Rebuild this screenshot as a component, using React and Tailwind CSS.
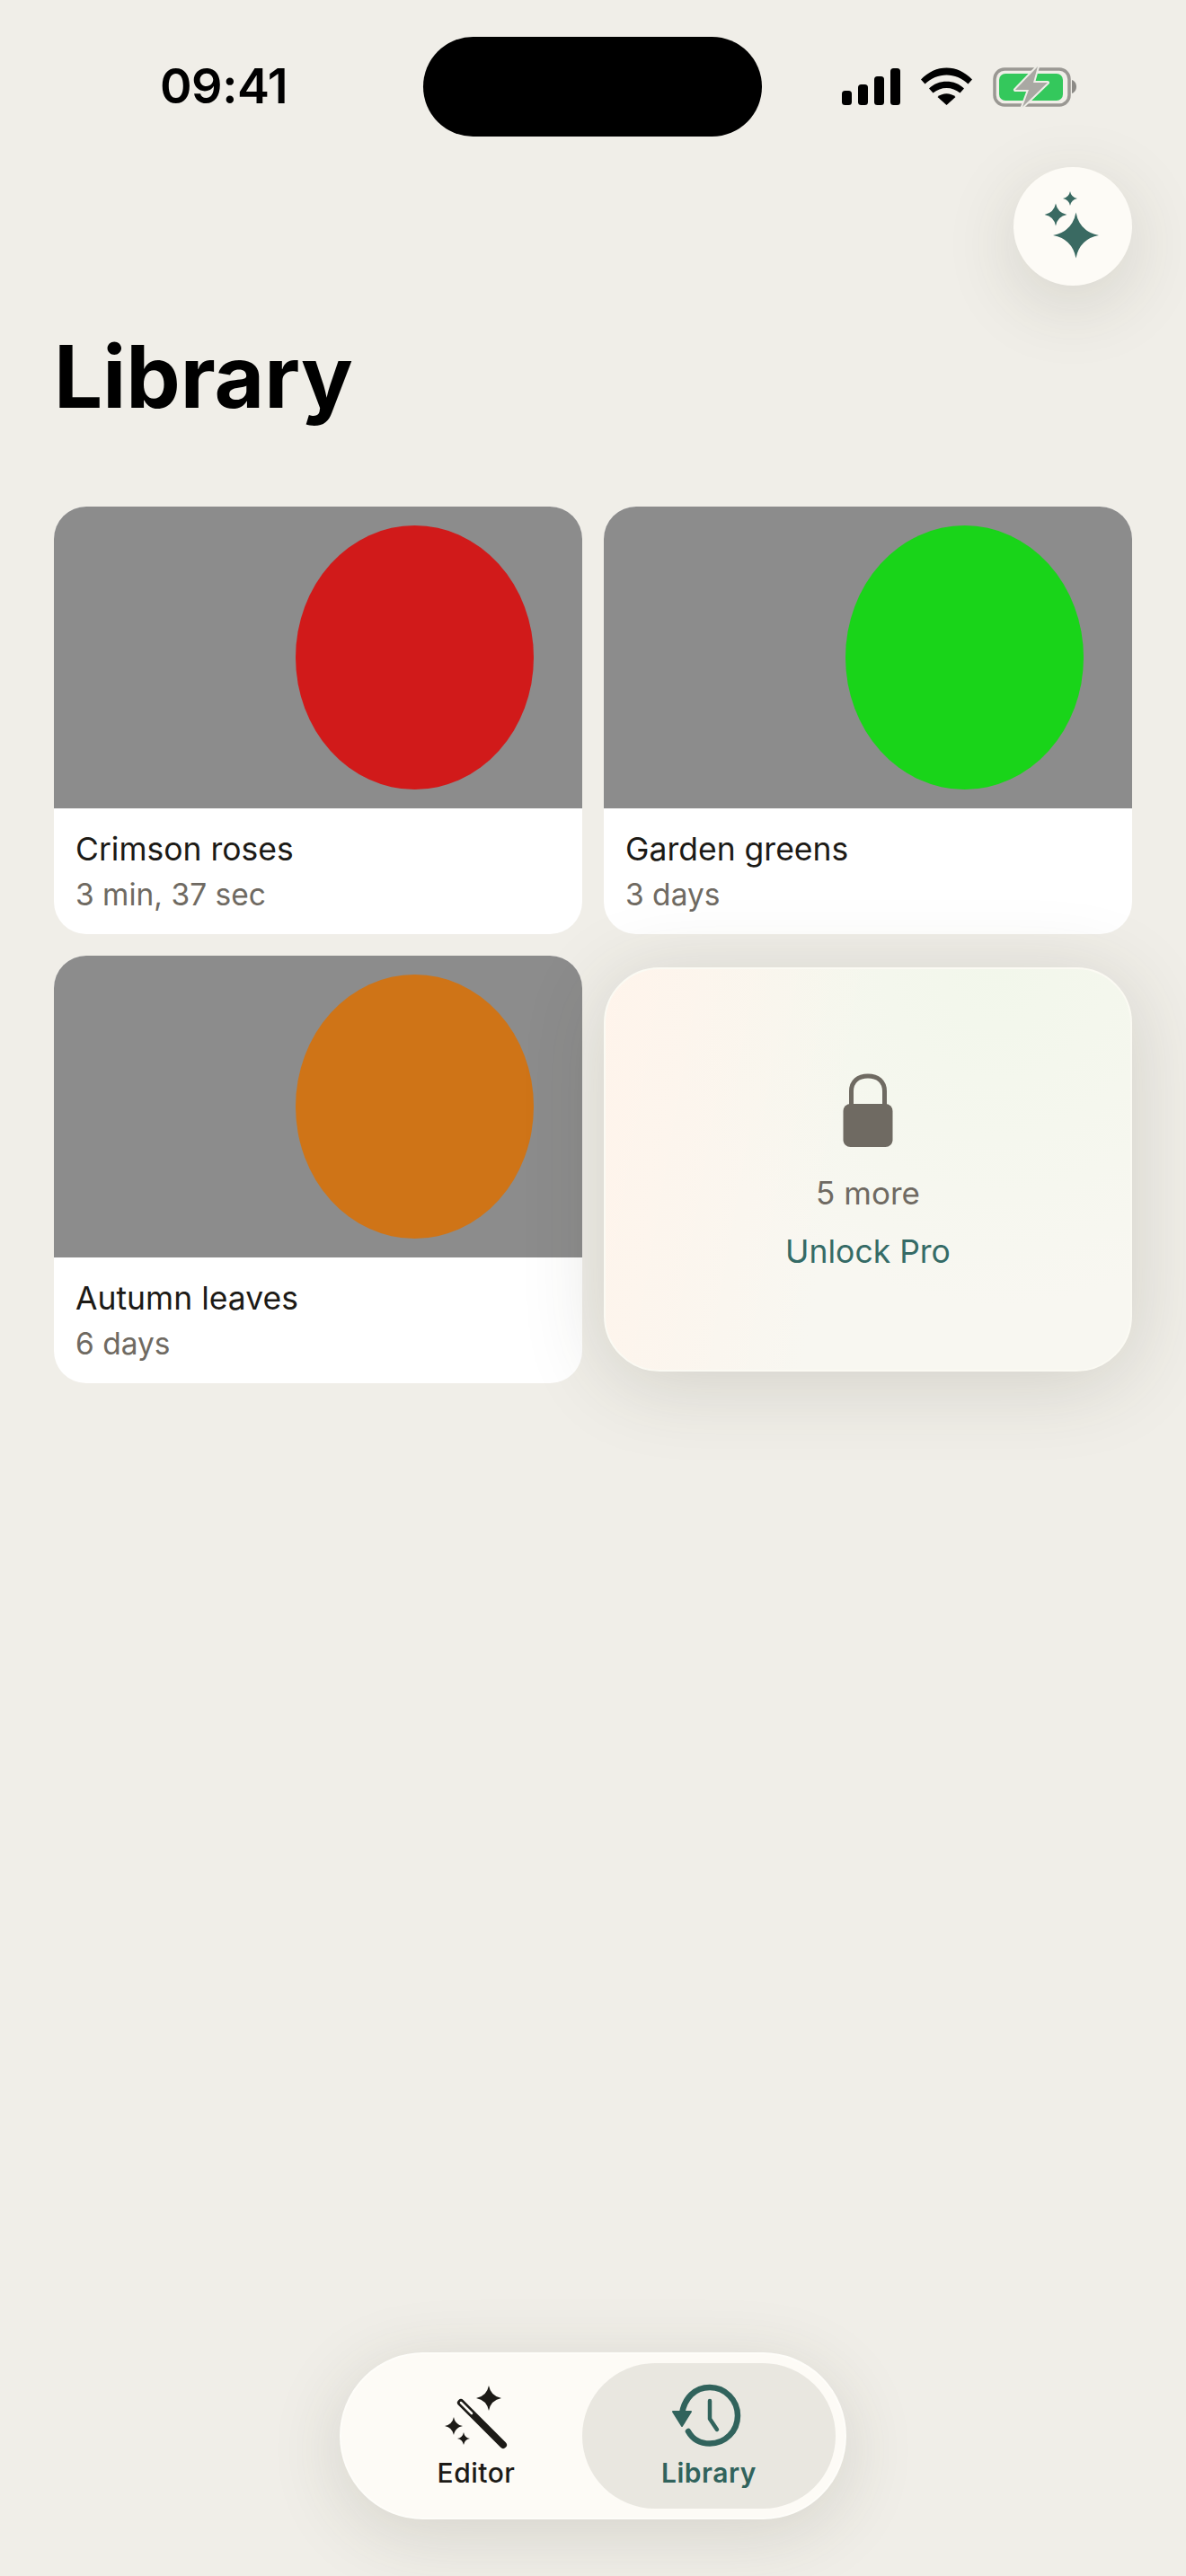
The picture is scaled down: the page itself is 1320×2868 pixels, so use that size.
const cards = [
  { name: "Crimson roses", age: "3 min, 37 sec", blob: "bg-[#d11a1a]" },
  { name: "Garden greens", age: "3 days", blob: "bg-[#19d419]" },
  { name: "Autumn leaves", age: "6 days", blob: "bg-[#cf7417]" },
];

// four point star, the same shape is used on the button and in the wand icon
const star = (cx, cy, r) => {
  const k = r * 0.16;
  return `M${cx} ${cy - r}Q${cx + k} ${cy - k} ${cx + r} ${cy}Q${cx + k} ${cy + k} ${cx} ${cy + r}Q${cx - k} ${cy + k} ${cx - r} ${cy}Q${cx - k} ${cy - k} ${cx} ${cy - r}Z`;
};

function StatusBar() {
  return (
    <div className="flex h-[111px] mt-[41px] items-center">
      <div className="w-[471px] pl-[178px] pb-[1px] text-[54px] leading-none font-semibold text-black tracking-[-0.5px]">09:41</div>
      <div className="w-[377px] h-[111px] rounded-full bg-black" />
      <svg width="261" height="46" viewBox="0 -1 261 46" className="ml-[89px]">
        <rect x="0" y="26" width="11" height="16" rx="3.5" fill="#000" />
        <rect x="18" y="19" width="11" height="23" rx="3.5" fill="#000" />
        <rect x="36" y="10" width="11" height="32" rx="3.5" fill="#000" />
        <rect x="54" y="1" width="11" height="41" rx="3.5" fill="#000" />
        <path d="M88 13.5C104 -4 129 -4 145 13.5L140.5 18.5C127 5 106 5 92.5 18.5Z" fill="#000" />
        <path d="M97 23.5C107 13 126 13 136 23.5L131.5 28.5C123 21 110 21 101.5 28.5Z" fill="#000" />
        <path d="M106.5 33C112 28 121 28 126.5 33L116.5 42Z" fill="#000" />
        <rect x="170" y="2" width="83" height="40" rx="11" fill="none" stroke="#9a9893" strokeWidth="3.5" />
        <rect x="175" y="7" width="71" height="30" rx="7" fill="#34c85c" />
        <path d="M256 14C259 15 261 18 261 21.5C261 25 259 28 256 29Z" fill="#8c8a86" />
        <path d="M218 -1L193 25H208L201 44L229 17H213Z" fill="#a9a8a3" stroke="#eeede7" strokeWidth="4" strokeLinejoin="round" paintOrder="stroke" />
      </svg>
    </div>
  );
}

function SparkleButton() {
  return (
    <div className="flex justify-end mt-[34px] px-[60px]">
      <button className="w-[132px] h-[132px] rounded-full bg-[#fdfbf6] flex items-center justify-center shadow-[0_20px_80px_rgba(60,60,40,0.15)]">
        <svg width="80" height="80" viewBox="0 0 80 80" fill="#3a6a62" className="ml-[2px]">
          <path d={star(42.5, 50, 25.5)} />
          <path d={star(20, 27, 12.4)} />
          <path d={star(36, 9, 8)} />
        </svg>
      </button>
    </div>
  );
}

function ClipCard({ name, age, blob }) {
  return (
    <div className="h-[476px] rounded-[36px] overflow-hidden bg-white">
      <div className="h-[336px] bg-[#8c8c8c] flex items-center justify-end pr-[54px]">
        <div className={`w-[265px] h-[294px] rounded-[50%] ${blob}`} />
      </div>
      <div className="pt-[22px] px-[24px]">
        <div className="text-[35.5px] leading-[48px] text-[#1c1a16]">{name}</div>
        <div className="text-[33.5px] leading-[46px] mt-[3px] text-[#6f6a62]">{age}</div>
      </div>
    </div>
  );
}

function ProCard() {
  return (
    <div className="my-[13px] h-[450px] rounded-[62px] border-2 border-[#fbfaf3] bg-[#f8f7f1] bg-[linear-gradient(100deg,rgba(255,244,235,1)_0%,rgba(255,244,235,0)_45%),radial-gradient(circle_at_75%_0%,rgba(242,247,235,1)_0%,rgba(242,247,235,0)_60%)] shadow-[0_12px_90px_rgba(60,60,40,0.17)] flex flex-col items-center pt-[116px]">
      <svg width="56" height="82" viewBox="0 0 56 82">
        <path d="M9.5 36V20C9.5 9 17 3 28 3S46.5 9 46.5 20V36" fill="none" stroke="#6f6a62" strokeWidth="5" />
        <rect x="0.5" y="34" width="55" height="48" rx="8" fill="#6f6a62" />
      </svg>
      <div className="text-[35px] leading-[46px] mt-[28px] text-[#6f6a62]">5 more</div>
      <div className="text-[35.5px] leading-[46px] mt-[20px] text-[#356b66]">Unlock Pro</div>
    </div>
  );
}

function BottomNav() {
  return (
    <div className="mt-auto mb-[63px] mx-auto w-[564px] h-[186px] rounded-full bg-[#fdfbf6] border-2 border-[#fefdf9] flex justify-end items-center pr-[10px] shadow-[0_16px_80px_rgba(60,60,40,0.15)]">
      <div className="w-[236px] flex flex-col items-center pt-[2px]">
        <svg width="72" height="72" viewBox="0 0 72 72" fill="#1c1a16">
          <path d={star(50, 15, 14)} />
          <path d={star(11, 46, 10)} />
          <path d={star(22, 60, 7)} />
          <path d="M19 20L66 67" stroke="#1c1a16" strokeWidth="8" strokeLinecap="round" fill="none" />
          <path d="M19 20L31 32" stroke="#fdfbf6" strokeWidth="2.5" strokeLinecap="round" fill="none" />
        </svg>
        <span className="text-[30px] leading-[38px] font-medium mt-[7px] tracking-[0.5px] text-[#1c1a16]">Editor</span>
      </div>
      <div className="w-[282px] h-[162px] rounded-full bg-[#e9e7e0] flex flex-col items-center pt-[23px]">
        <svg width="80" height="72" viewBox="0 0 80 72" className="-translate-x-[3px]">
          <path d="M20 53C25 62 33 66.5 44 66.5C61 66.5 75 53 75 35.5C75 18 61 4 44 4C27 4 16 16 13 33" fill="none" stroke="#31635c" strokeWidth="6.5" strokeLinecap="round" />
          <path d="M3 31H23L13 47Z" fill="#31635c" stroke="#31635c" strokeWidth="2" strokeLinejoin="round" />
          <path d="M44 19V39L52 51" fill="none" stroke="#31635c" strokeWidth="4.5" strokeLinecap="round" strokeLinejoin="round" />
        </svg>
        <span className="text-[30px] leading-[38px] font-semibold mt-[8px] tracking-[0.5px] text-[#31635c]">Library</span>
      </div>
    </div>
  );
}

export default function App() {
  return (
    <div className="w-[1320px] h-[2868px] bg-[#f0eee8] flex flex-col font-['Inter',sans-serif] overflow-hidden">
      <StatusBar />
      <SparkleButton />
      <h1 className="mt-[43px] mb-[87px] px-[60px] text-[96px] leading-[116px] font-bold text-black">Library</h1>
      <div className="px-[60px] grid grid-cols-2 gap-[24px]">
        {cards.map((c) => (
          <ClipCard key={c.name} {...c} />
        ))}
        <ProCard />
      </div>
      <BottomNav />
    </div>
  );
}
